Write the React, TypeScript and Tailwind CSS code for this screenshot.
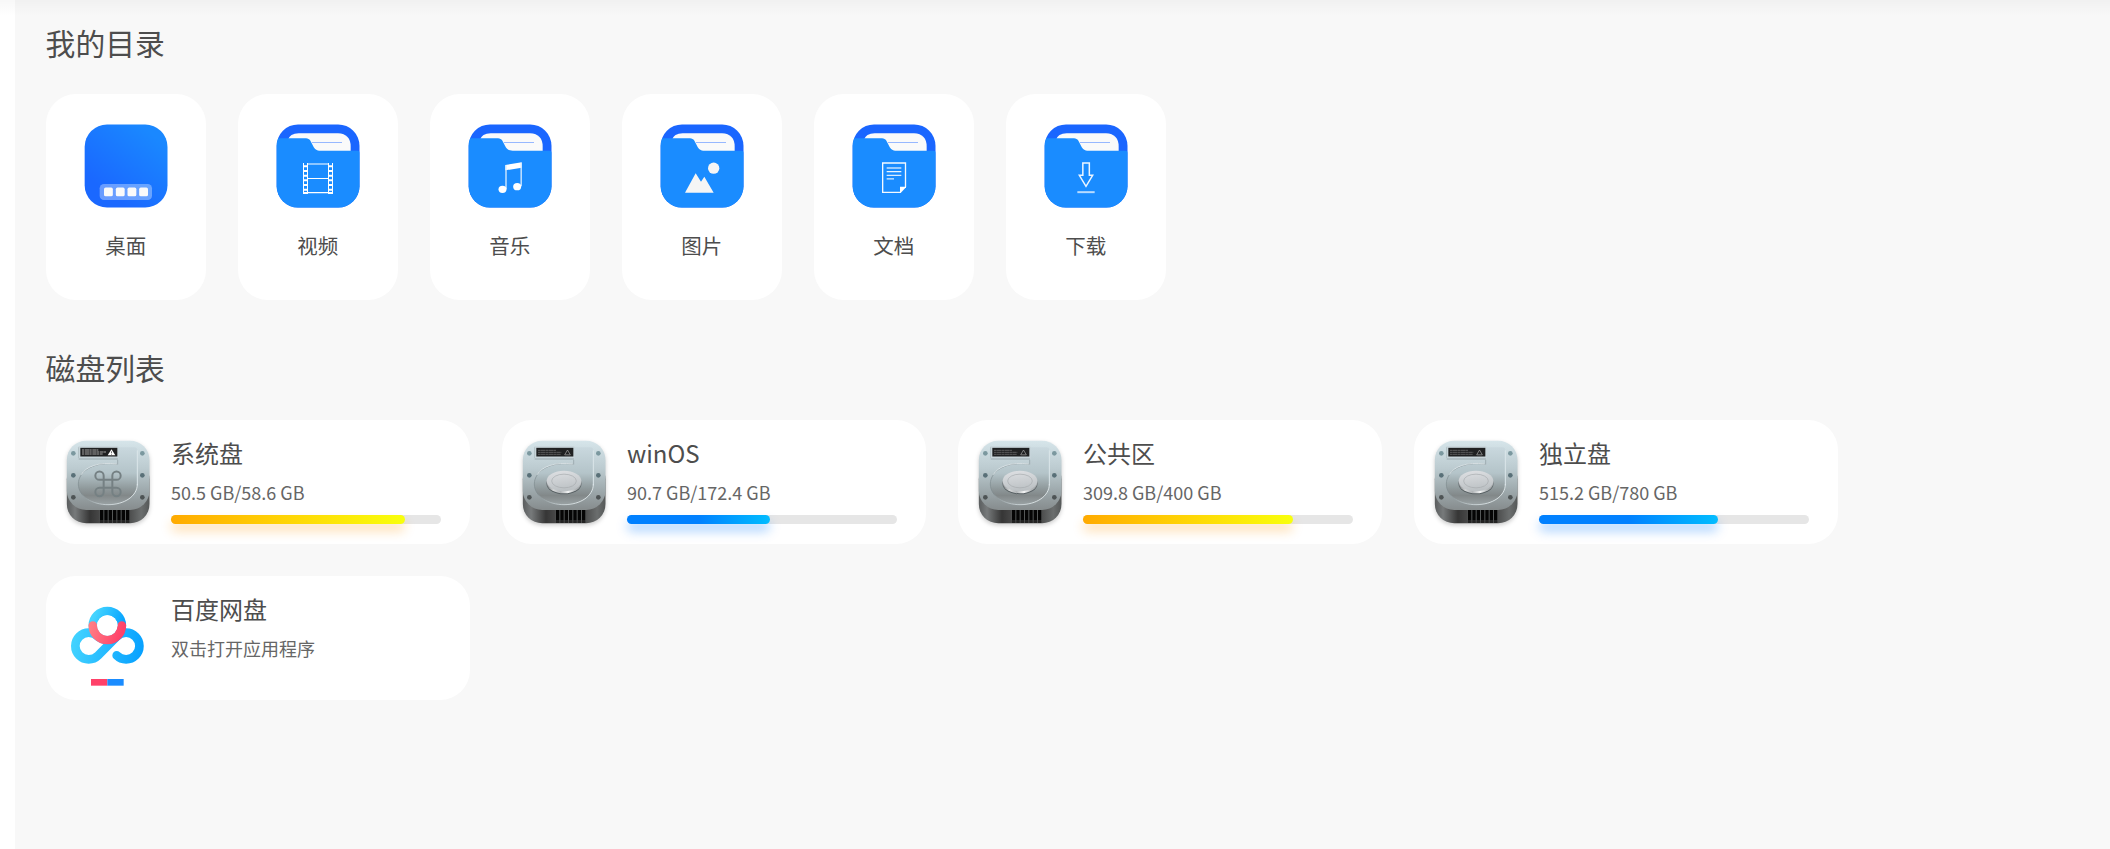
import type { ReactNode } from 'react'

const FONT = "font-['Noto_Sans_CJK_SC','Noto_Sans',sans-serif]"

function DesktopIcon() {
  return (
    <svg viewBox="0 0 252 252" className="size-[84px]">
      <defs>
        <linearGradient id="desk" x1="0.25" y1="0.8" x2="0.8" y2="0.1">
          <stop offset="0" stopColor="#1a68ff" />
          <stop offset="1" stopColor="#1a88ff" />
        </linearGradient>
      </defs>
      <rect x="2" y="1.5" width="248.5" height="249" rx="67" fill="url(#desk)" />
      <rect x="47" y="180" width="157" height="48" rx="13" fill="#fff" fillOpacity="0.35" />
      {[60, 95.5, 130.5, 165.5].map((x) => (
        <rect key={x} x={x} y="190.5" width="26.5" height="26.5" rx="5" fill="#fafafa" />
      ))}
    </svg>
  )
}

function Folder({ children }: { children: ReactNode }) {
  return (
    <svg viewBox="0 0 252 252" className="size-[84px]">
      <defs>
        <clipPath id="folder-clip">
          <rect x="2" y="1.5" width="248.5" height="249" rx="64" />
        </clipPath>
      </defs>
      <g clipPath="url(#folder-clip)">
        <rect width="252" height="252" fill="#1a66ff" />
        <path d="M34 50Q42 28 68 28H186Q224 30 224 68V86H34Z" fill="#fafafa" />
        <path d="M108 55.5H198" stroke="#97b8ff" strokeWidth="3" />
        <path d="M0 43H90C102 43 105 54 111 65C116 75 121 80 134 80H244Q251 80 252 86V252H0Z" fill="#1a8cff" />
      </g>
      {children}
    </svg>
  )
}

function VideoIcon() {
  const bars = [127, 141, 155, 169, 183, 197, 207]
  return (
    <Folder>
      <g stroke="#fff" fill="none">
        <path d="M82.5 117V210M169.5 117V210" strokeWidth="3" />
        <path d="M94.5 117V210M157.5 117V210" strokeWidth="3" />
        <path d="M94 120H158M94 163.5H158M94 206H158" strokeWidth="3.5" />
        {bars.map((y) => (
          <path key={y} d={`M82 ${y}H95M157 ${y}H170`} strokeWidth="6" />
        ))}
      </g>
    </Folder>
  )
}

function MusicIcon() {
  return (
    <Folder>
      <path d="M112 123L161 115V131L112 139Z" fill="#fff" />
      <path d="M114 124V195M159.5 116V187" stroke="#d9ecff" strokeWidth="4" />
      <ellipse cx="103.5" cy="196" rx="12" ry="11" fill="#fff" />
      <ellipse cx="147.5" cy="188" rx="12" ry="11" fill="#fff" />
    </Folder>
  )
}

function PictureIcon() {
  return (
    <Folder>
      <circle cx="161" cy="132.5" r="17" fill="#f5f5f5" />
      <path d="M75 206.5L107 148L123 173L133 158L161 206.5Z" fill="#f5f5f5" />
    </Folder>
  )
}

function DocumentIcon() {
  return (
    <Folder>
      <path d="M146 205H92V117H160.5V189" fill="none" stroke="#f4f9ff" strokeWidth="4" />
      <path d="M144 188H162V190L146 207H144Z" fill="#fff" />
      <path d="M104 132H148" stroke="#b3d8ff" strokeWidth="5" />
      <path d="M104 143H148" stroke="#fff" strokeWidth="3.5" />
      <path d="M104 154H148M104 164.5H126" stroke="#d9ebff" strokeWidth="4" />
    </Folder>
  )
}

function DownloadIcon() {
  return (
    <Folder>
      <path d="M116.5 117H136V154H146L126 187L106 154H116.5Z" fill="none" stroke="#ecf5ff" strokeWidth="4.5" />
      <path d="M100 204.5H152" stroke="#b8dbff" strokeWidth="6" />
    </Folder>
  )
}

function DiskIcon({ system = false }: { system?: boolean }) {
  return (
    <svg
      viewBox="0 0 252 252"
      className="size-[84px] shrink-0 overflow-visible drop-shadow-[0_2px_2px_rgba(0,0,0,0.2)]"
    >
      <defs>
        <linearGradient id="base">
          <stop offset="0" stopColor="#5a5d5e" />
          <stop offset="0.1" stopColor="#777a7b" />
          <stop offset="0.28" stopColor="#363636" />
          <stop offset="0.4" stopColor="#484848" />
          <stop offset="0.75" stopColor="#4a4b4b" />
          <stop offset="0.9" stopColor="#6b6e6e" />
          <stop offset="1" stopColor="#555858" />
        </linearGradient>
        <linearGradient id="plate" x2="0" y2="1">
          <stop offset="0" stopColor="#d6e5ea" />
          <stop offset="0.4" stopColor="#bccbd0" />
          <stop offset="0.75" stopColor="#9ba6a9" />
          <stop offset="1" stopColor="#868c8d" />
        </linearGradient>
        <linearGradient id="well" x2="0" y2="1">
          <stop offset="0" stopColor="#c9d8de" />
          <stop offset="0.45" stopColor="#b4c4c9" />
          <stop offset="0.72" stopColor="#8f999b" />
          <stop offset="0.84" stopColor="#828889" />
          <stop offset="1" stopColor="#9aa2a4" />
        </linearGradient>
        <linearGradient id="rim" x2="1" y2="0.6">
          <stop offset="0" stopColor="#8f9ea3" />
          <stop offset="0.35" stopColor="#7e898c" />
          <stop offset="0.75" stopColor="#c9d3d6" />
          <stop offset="1" stopColor="#e8f0f2" />
        </linearGradient>
        <linearGradient id="hub" x2="0.2" y2="1">
          <stop offset="0" stopColor="#dfe1e4" />
          <stop offset="1" stopColor="#bcc1c4" />
        </linearGradient>
        <linearGradient id="hub-edge">
          <stop offset="0" stopColor="#85898c" />
          <stop offset="0.2" stopColor="#d4d6d7" />
          <stop offset="0.4" stopColor="#b0b4b6" />
          <stop offset="0.62" stopColor="#f4f5f5" />
          <stop offset="0.82" stopColor="#b4b8ba" />
          <stop offset="1" stopColor="#a0a4a6" />
        </linearGradient>
      </defs>
      <rect x="2.5" y="60" width="248" height="190" rx="58" fill="url(#base)" />
      <rect x="101" y="208" width="91" height="34" fill="#555858" />
      {[0, 1, 2, 3, 4, 5, 6].map((i) => (
        <g key={i}>
          <rect x={102 + i * 13} y="208" width="10" height="32" fill="#050505" />
          <rect x={102 + i * 13} y="240" width="10" height="9" fill="#222" />
        </g>
      ))}
      <rect x="2.5" y="2" width="248" height="208" rx="58" fill="url(#plate)" />
      <path
        d="M154 60V73C88 62 37 92 37 132C37 170 80 194 126 194C176 194 214 168 214 132V31Q214 22 205 22H154Z"
        fill="url(#well)"
      />
      <path
        d="M154 73C88 62 37 92 37 132C37 170 80 194 126 194C176 194 214 168 214 132"
        fill="none"
        stroke="url(#rim)"
        strokeWidth="2.5"
      />
      <path d="M46 104C60 80 98 65 152 72" fill="none" stroke="#e2ebee" strokeWidth="2.5" />
      <path d="M214 136V31" stroke="#dbe6ea" strokeWidth="3" />
      <path d="M155 60V73" stroke="#8e9da2" strokeWidth="2" />
      <rect x="36" y="19" width="122" height="39" rx="4" fill="#c7d4d9" />
      <path d="M38 57H156" stroke="#9aa9ae" strokeWidth="3" />
      <path d="M37.5 22V54" stroke="#a9b8bd" strokeWidth="2" />
      <rect x="43" y="23.5" width="111" height="26" fill="#202122" />
      {system ? (
        <g>
          <path d="M48 30H97M48 36H120M48 42H110" stroke="#777" strokeWidth="4" strokeDasharray="7 2 12 1" />
          <path d="M136.5 28L148 46H125Z" fill="#fff" />
          <path d="M136.5 34V40M136.5 42V44" stroke="#222" strokeWidth="2" />
        </g>
      ) : (
        <g>
          <path d="M48 31H103M48 37H118M48 43H117" stroke="#777" strokeWidth="2" strokeDasharray="8 1 13 1" />
          <path d="M136.5 30L145 44.5H128Z" fill="none" stroke="#aaa" strokeWidth="2" />
        </g>
      )}
      {[22, 229].map((x) => (
        <g key={x}>
          <circle cx={x} cy="40" r="7" fill="#7b989f" />
          <circle cx={x} cy="106" r="7" fill="#597078" />
          <circle cx={x} cy="172" r="7" fill="#4e5455" />
        </g>
      ))}
      {system ? (
        <path
          d="M113 118V107A12.500 12.500 0 1 0 100.500 119.500H151.500A12.500 12.500 0 1 0 139 107V156A12.500 12.500 0 1 0 151.500 143.500H100.500A12.500 12.500 0 1 0 113 156Z"
          fill="none"
          stroke="#758083"
          strokeWidth="6"
        />
      ) : (
        <g>
          <ellipse cx="126" cy="131" rx="52.5" ry="32" fill="#596164" />
          <ellipse cx="126" cy="128" rx="52" ry="32" fill="url(#hub-edge)" />
          <ellipse cx="126" cy="123" rx="52" ry="31" fill="url(#hub)" />
          <ellipse cx="126" cy="123" rx="37" ry="20.5" fill="none" stroke="#a6abae" strokeWidth="2" />
        </g>
      )}
    </svg>
  )
}

function NetdiskIcon() {
  return (
    <svg viewBox="0 0 252 252" className="size-[84px] shrink-0 overflow-visible">
      <defs>
        <linearGradient id="nd-blue" gradientUnits="userSpaceOnUse" x1="15" y1="130" x2="234" y2="170">
          <stop offset="0" stopColor="#44d4ff" />
          <stop offset="1" stopColor="#06a0ff" />
        </linearGradient>
        <linearGradient id="nd-top" gradientUnits="userSpaceOnUse" x1="88" y1="50" x2="170" y2="85">
          <stop offset="0" stopColor="#44d4ff" />
          <stop offset="1" stopColor="#06a3ff" />
        </linearGradient>
        <linearGradient id="nd-red" gradientUnits="userSpaceOnUse" x1="75" y1="90" x2="165" y2="120">
          <stop offset="0" stopColor="#ff7c83" />
          <stop offset="1" stopColor="#ff4169" />
        </linearGradient>
      </defs>
      <g fill="none" strokeWidth="26" strokeLinecap="round">
        <path
          d="M152 178.3A40 40 0 1 0 152 121.7L96.3 178.3A40 40 0 1 1 96.3 121.7"
          stroke="url(#nd-blue)"
        />
        <circle cx="124" cy="88.5" r="43.5" stroke="url(#nd-top)" />
        <path d="M80.5 88.5A43.5 43.5 0 0 0 167.5 88.5" stroke="url(#nd-red)" />
      </g>
      <circle cx="124" cy="88.5" r="30.5" fill="#fff" />
      <rect x="75" y="249" width="49" height="20" fill="#ff4169" />
      <rect x="124" y="249" width="49" height="20" fill="#1a8cff" />
    </svg>
  )
}

const folders = [
  { name: '桌面', icon: <DesktopIcon /> },
  { name: '视频', icon: <VideoIcon /> },
  { name: '音乐', icon: <MusicIcon /> },
  { name: '图片', icon: <PictureIcon /> },
  { name: '文档', icon: <DocumentIcon /> },
  { name: '下载', icon: <DownloadIcon /> },
]

const disks = [
  { name: '系统盘', usage: '50.5 GB/58.6 GB', percent: 86.7, warm: true, system: true },
  { name: 'winOS', usage: '90.7 GB/172.4 GB', percent: 52.9, warm: false, system: false },
  { name: '公共区', usage: '309.8 GB/400 GB', percent: 77.8, warm: true, system: false },
  { name: '独立盘', usage: '515.2 GB/780 GB', percent: 66.2, warm: false, system: false },
]

const WARM = 'bg-linear-to-r from-[#ffaa00] to-[#f8ff0c] shadow-[0_7px_11px_rgba(255,155,20,0.32)]'
const COOL = 'bg-linear-to-r from-[#0080ff] via-[#0080ff] to-[#06bcff] shadow-[0_7px_11px_rgba(0,120,255,0.34)]'

function DiskCard({ icon, name, note, children }: { icon: ReactNode; name: string; note: string; children?: ReactNode }) {
  return (
    <li className="flex h-[124px] w-[424.6px] gap-[21px] rounded-[30px] bg-white pl-[20.4px] pt-5">
      {icon}
      <div className="w-[270px]">
        <h3 className="mt-[-5px] text-2xl leading-9 text-[#4d4d4d]">{name}</h3>
        <p className="mt-[8px] text-lg leading-[26px] text-[#666]">{note}</p>
        {children}
      </div>
    </li>
  )
}

export default function App() {
  return (
    <div className={`relative flex h-[849px] overflow-hidden bg-white ${FONT}`}>
      <main className="ml-[15px] flex-1 bg-[#f8f8f8] pl-[30.6px] pt-[20px]">
        <h2 className="text-[29.8px] leading-[44px] text-[#4d4d4d]">我的目录</h2>
        <ul className="mt-[30px] flex gap-[31.6px]">
          {folders.map((f) => (
            <li key={f.name} className="flex h-[206px] w-[160.4px] flex-col items-center rounded-[30px] bg-white pt-[30px]">
              {f.icon}
              <span className="mt-[22px] text-[20.5px] leading-[30px] text-[#4d4d4d]">{f.name}</span>
            </li>
          ))}
        </ul>
        <h2 className="mt-[45px] text-[29.8px] leading-[44px] text-[#4d4d4d]">磁盘列表</h2>
        <ul className="mt-[31px] flex w-[1900px] flex-wrap gap-x-[31.4px] gap-y-8">
          {disks.map((d) => (
            <DiskCard key={d.name} icon={<DiskIcon system={d.system} />} name={d.name} note={d.usage}>
              <div className="mt-[10px] h-[9px] rounded-full bg-[#e6e6e6]">
                <div className={`h-full rounded-full ${d.warm ? WARM : COOL}`} style={{ width: `${d.percent}%` }} />
              </div>
            </DiskCard>
          ))}
          <DiskCard icon={<NetdiskIcon />} name="百度网盘" note="双击打开应用程序" />
        </ul>
      </main>
      <div className="pointer-events-none absolute inset-x-0 top-0 h-4 bg-linear-to-b from-black/3 to-transparent" />
    </div>
  )
}
